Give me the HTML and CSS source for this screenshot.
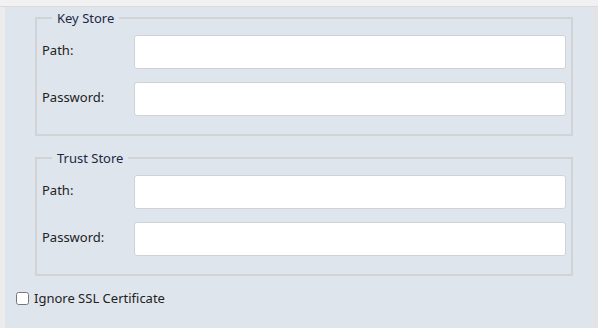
FILE: index.html
```html
<!DOCTYPE html>
<html lang="en">
<head>
    <meta charset="UTF-8">
    <title>SSL Settings</title>
    <link rel="stylesheet" href="styles.css">
</head>
<body>
    <div class="topbar"></div>
    <div class="main">
        <div class="side left"></div>
        <div class="panel">
            <fieldset class="group">
                <legend>Key Store</legend>
                <div class="row">
                    <label class="label" for="ksPath">Path:</label>
                    <input class="field" id="ksPath" type="text">
                </div>
                <div class="row">
                    <label class="label" for="ksPass">Password:</label>
                    <input class="field" id="ksPass" type="password">
                </div>
            </fieldset>

            <fieldset class="group">
                <legend>Trust Store</legend>
                <div class="row">
                    <label class="label" for="tsPath">Path:</label>
                    <input class="field" id="tsPath" type="text">
                </div>
                <div class="row">
                    <label class="label" for="tsPass">Password:</label>
                    <input class="field" id="tsPass" type="password">
                </div>
            </fieldset>

            <label class="check">
                <input type="checkbox" class="box">
                <span>Ignore SSL Certificate</span>
            </label>
        </div>
        <div class="side right"></div>
    </div>
</body>
</html>
```

FILE: styles.css
```css
html, body {
    margin: 0;
    height: 100%;
}
body {
    font-family: "Noto Sans", "Open Sans", sans-serif;
    font-size: 13px;
    color: #222;
    background-color: #dfe5ed;
    display: flex;
    flex-direction: column;
}
.topbar {
    height: 6px;
    background-color: #f1f1f1;
    border-bottom: 1px solid #dadada;
}
.main {
    flex: 1;
    display: flex;
}
.side.left {
    width: 5px;
    background-color: #ececec;
}
.side.right {
    width: 6px;
    background-color: #e2e4e8;
}
.panel {
    flex: 1;
    background-color: #dfe5ed;
    padding: 2px 0 0 30px;
}
.group {
    width: 524px;
    margin: 0 0 13px 0;
    padding: 8px 5px 18px 5px;
    border: 2px solid #d2d3d5;
    border-radius: 0;
}
.group legend {
    padding: 0 5px;
    margin-left: 10px;
    color: #1d2845;
    line-height: 18px;
}
.row {
    display: flex;
    align-items: center;
}
.row + .row {
    margin-top: 13px;
}
.label {
    width: 92px;
    padding-bottom: 4px;
}
.field {
    flex: 1;
    height: 34px;
    box-sizing: border-box;
    border: 1px solid #cfd3d8;
    border-radius: 3px;
    background-color: #fff;
    margin: 0;
}
.check {
    display: flex;
    align-items: center;
    height: 18px;
    margin-left: -19px;
}
.box {
    width: 13px;
    height: 13px;
    margin: 0 5px 0 0;
}
```
